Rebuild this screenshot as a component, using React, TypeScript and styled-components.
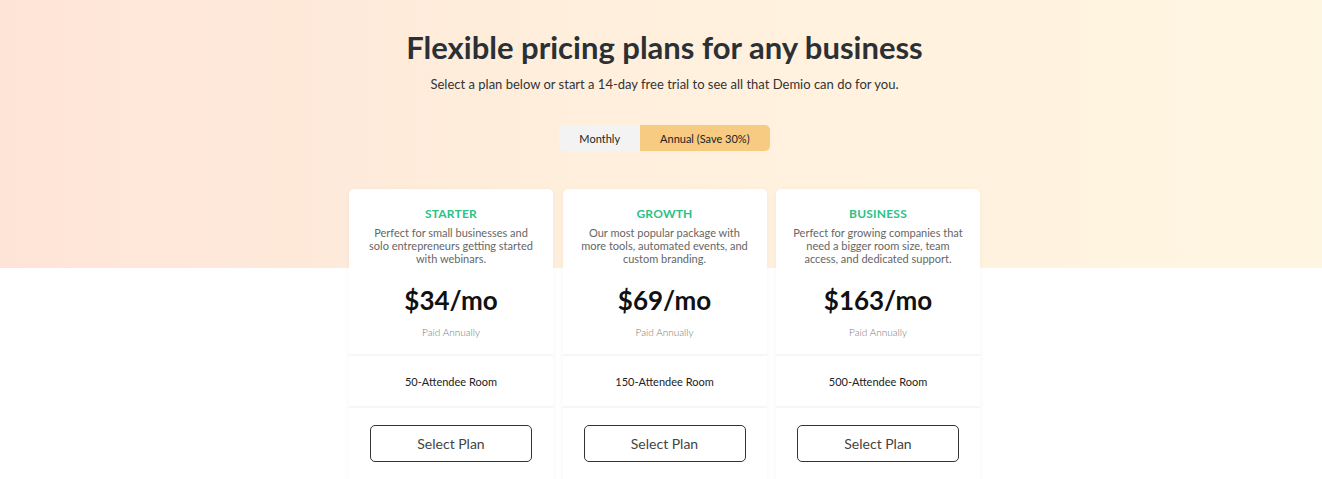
import styled, { createGlobalStyle } from 'styled-components'

const plans = [
  {
    name: 'STARTER',
    description: 'Perfect for small businesses and solo entrepreneurs getting started with webinars.',
    price: '$34/mo',
    room: '50-Attendee Room',
  },
  {
    name: 'GROWTH',
    description: 'Our most popular package with more tools, automated events, and custom branding.',
    price: '$69/mo',
    room: '150-Attendee Room',
  },
  {
    name: 'BUSINESS',
    description: 'Perfect for growing companies that need a bigger room size, team access, and dedicated support.',
    price: '$163/mo',
    room: '500-Attendee Room',
  },
]

function App() {
  return (
    <>
      <GlobalStyle />
      <Page>
        <Title>Flexible pricing plans for any business</Title>
        <Subtitle>Select a plan below or start a 14-day free trial to see all that Demio can do for you.</Subtitle>
        <Toggle>
          <ToggleOption>Monthly</ToggleOption>
          <ToggleOption active>Annual (Save 30%)</ToggleOption>
        </Toggle>
        <Cards>
          {plans.map(({ name, description, price, room }) => (
            <Card key={name}>
              <CardHead>
                <PlanName>{name}</PlanName>
                <Description>{description}</Description>
                <Price>{price}</Price>
                <Billing>Paid Annually</Billing>
              </CardHead>
              <Feature>{room}</Feature>
              <CardFoot>
                <SelectButton>Select Plan</SelectButton>
              </CardFoot>
            </Card>
          ))}
        </Cards>
      </Page>
    </>
  )
}

const GlobalStyle = createGlobalStyle`
  body {
    margin: 0;
    background: #fff;
    font-family: Lato, "Open Sans", sans-serif;
  }
`

const Page = styled.main`
  display: flex;
  flex-direction: column;
  align-items: center;
  min-height: 479px;
  padding: 29px 0 0 7px;
  box-sizing: border-box;
  background: linear-gradient(90deg, #fee4d7 0%, #fff0dd 50%, #fff6e2 100%) top / 100% 268px no-repeat;
`

const Title = styled.h1`
  margin: 0;
  font-size: 31px;
  line-height: 36px;
  font-weight: 700;
  color: #2b3035;
`

const Subtitle = styled.p`
  margin: 11px 0 0;
  font-size: 13px;
  line-height: 17px;
  color: #333;
`

const Toggle = styled.div`
  display: flex;
  margin-top: 32px;
  border-radius: 5px;
  overflow: hidden;
`

const ToggleOption = styled.button<{ active?: boolean }>`
  height: 26px;
  padding: 0 20px;
  border: 0;
  font-family: inherit;
  font-size: 11px;
  color: #222;
  background: ${({ active }) => (active ? '#f7cb82' : '#f3f3f3')};
`

const Cards = styled.div`
  display: flex;
  gap: 9.5px;
  margin-top: 38px;
`

const Card = styled.section`
  width: 204px;
  height: 300px;
  background: #fff;
  border-radius: 5px;
  box-shadow: 0 1px 6px rgba(0, 0, 0, 0.04);
  text-align: center;
`

const CardHead = styled.div`
  padding: 18px 14px 0;
  height: 167px;
  box-sizing: border-box;
  border-bottom: 2px solid #f6f6f6;
`

const PlanName = styled.h3`
  margin: 0;
  font-size: 12px;
  line-height: 14px;
  font-weight: 700;
  letter-spacing: 0.2px;
  color: #2cc185;
`

const Description = styled.p`
  margin: 5px 0 0;
  font-size: 11px;
  line-height: 13px;
  color: #666;
`

const Price = styled.div`
  margin-top: 20px;
  font-size: 26px;
  line-height: 30px;
  font-weight: 700;
  color: #111;
`

const Billing = styled.div`
  margin-top: 11px;
  font-size: 10px;
  line-height: 12px;
  font-weight: 300;
  color: #777;
`

const Feature = styled.div`
  height: 50px;
  display: flex;
  align-items: center;
  justify-content: center;
  font-size: 11px;
  color: #222;
  border-bottom: 2px solid #f6f6f6;
`

const CardFoot = styled.div`
  padding-top: 17px;
  display: flex;
  justify-content: center;
`

const SelectButton = styled.button`
  width: 162px;
  height: 37px;
  border: 1px solid #333;
  border-radius: 5px;
  background: #fff;
  font-family: inherit;
  font-size: 14px;
  font-weight: 400;
  color: #444;
`

export default App
